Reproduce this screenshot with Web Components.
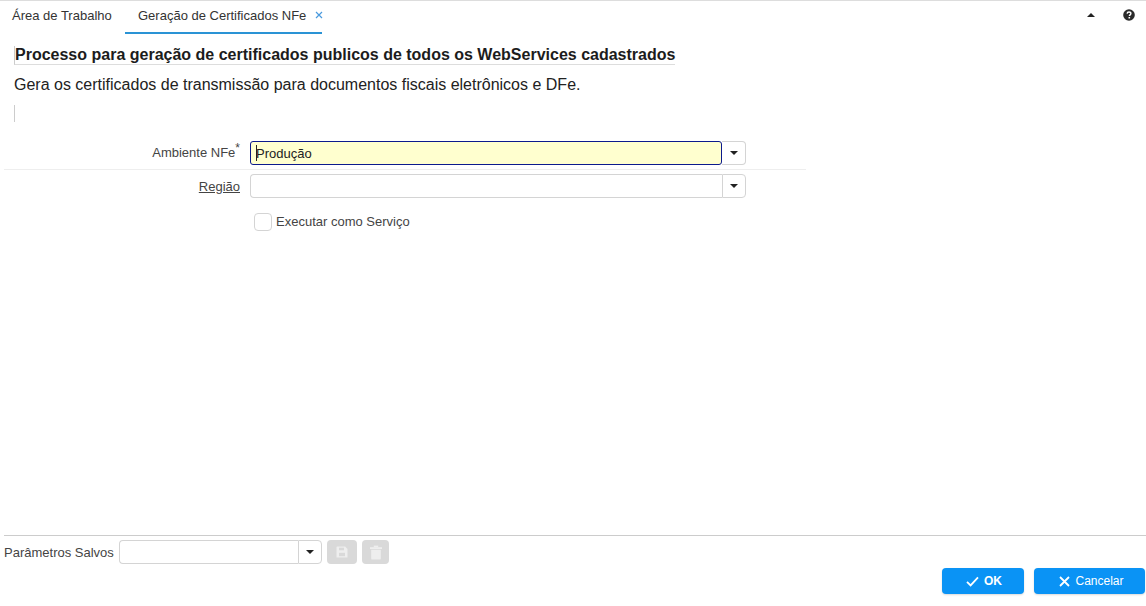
<!DOCTYPE html>
<html lang="pt">
<head>
<meta charset="utf-8">
<title>Geração de Certificados NFe</title>
<style>
  html, body { margin: 0; height: 100%; }
  body { font-family: "Liberation Sans", Arial, sans-serif; color: #333; background: #fff; overflow: hidden; }
</style>
</head>
<body>
<app-shell>
  <tab-bar slot="tabs"></tab-bar>
  <process-header slot="header"
    heading="Processo para geração de certificados publicos de todos os WebServices cadastrados"
    text="Gera os certificados de transmissão para documentos fiscais eletrônicos e DFe."></process-header>
  <param-form slot="form"></param-form>
  <saved-params slot="saved"></saved-params>
  <action-bar slot="actions"></action-bar>
</app-shell>

<script>
class AppShell extends HTMLElement {
  constructor() {
    super();
    this.attachShadow({ mode: "open" });
    this.shadowRoot.innerHTML = `
      <style>
        :host { display: flex; flex-direction: column; height: 606px; box-sizing: border-box; border-top: 1px solid #ddd; }
        .grow { flex: 1; }
      </style>
      <slot name="tabs"></slot>
      <slot name="header"></slot>
      <slot name="form"></slot>
      <div class="grow"></div>
      <slot name="saved"></slot>
      <slot name="actions"></slot>
    `;
  }
}
customElements.define("app-shell", AppShell);

class TabBar extends HTMLElement {
  constructor() {
    super();
    this.attachShadow({ mode: "open" });
    this.shadowRoot.innerHTML = `
      <style>
        :host { display: flex; height: 33px; font-size: 13px; color: #333; }
        .tab { box-sizing: border-box; height: 33px; display: flex; align-items: center; padding-bottom: 5px; white-space: nowrap; }
        .first { margin-left: 12px; width: 113px; }
        .active { width: 197px; padding-left: 13px; border-bottom: 2px solid #2a93d5; padding-bottom: 3px; }
        .close { margin-left: 9px; width: 8px; height: 8px; flex: none; }
        .right { margin-left: auto; display: flex; align-items: center; padding-bottom: 5px; }
        .up { width: 0; height: 0; border: 4px solid transparent; border-top: 0; border-bottom: 4px solid #222; margin-right: 28px; }
        .help { width: 12px; height: 12px; margin-right: 11px; }
      </style>
      <div class="tab first">Área de Trabalho</div>
      <div class="tab active"><span>Geração de Certificados NFe</span>
        <svg class="close" viewBox="0 0 8 8"><path d="M1 1l6 6M7 1L1 7" stroke="#4a9ade" stroke-width="1.2" fill="none"/></svg>
      </div>
      <div class="right">
        <span class="up"></span>
        <svg class="help" viewBox="0 0 12 12"><circle cx="6" cy="6" r="5.8" fill="#2b2b2b"/><path d="M4.1 4.6C4.2 3.5 5 3 6 3c1.1 0 1.9.6 1.9 1.6 0 1.3-1.5 1.3-1.5 2.5" stroke="#fff" stroke-width="1.4" fill="none"/><rect x="5.5" y="8" width="1.6" height="1.5" fill="#fff"/></svg>
      </div>
    `;
  }
}
customElements.define("tab-bar", TabBar);

class ProcessHeader extends HTMLElement {
  constructor() {
    super();
    this.attachShadow({ mode: "open" });
  }
  connectedCallback() {
    this.shadowRoot.innerHTML = `
      <style>
        :host { display: block; padding: 12px 0 0 14px; color: #222; }
        h1 { display: inline-block; margin: 0; font-size: 16px; line-height: 18px; font-weight: bold; color: #1c1c1c; padding: 0; border-left: 1px solid #ccc; border-bottom: 1px solid #ddd; }
        p { margin: 10px 0 0; font-size: 16px; line-height: 20px; }
        .mark { width: 1px; height: 17px; background: #ccc; margin-top: 10px; }
      </style>
      <h1>${this.getAttribute("heading")}</h1>
      <p>${this.getAttribute("text")}</p>
      <div class="mark"></div>
    `;
  }
}
customElements.define("process-header", ProcessHeader);

class ComboBox extends HTMLElement {
  constructor() {
    super();
    this.attachShadow({ mode: "open" });
    this.shadowRoot.innerHTML = `
      <style>
        :host { display: flex; height: 24px; width: var(--combo-width, 496px); font-size: 13px; color: #222; }
        .field { box-sizing: border-box; flex: 1; border: 1px solid #d4d4d4; border-right: 0; border-radius: 4px 0 0 4px; display: flex; align-items: center; padding-left: 5px; background: #fff; }
        .btn { box-sizing: border-box; width: 24px; border: 1px solid #d4d4d4; border-radius: 0 4px 4px 0; display: flex; align-items: center; justify-content: center; background: #fff; }
        .btn i { width: 0; height: 0; border: 4px solid transparent; border-bottom: 0; border-top: 4px solid #222; }
        :host([focused]) .field { background: #ffffcf; border: 1px solid #0c1a8c; border-radius: 3px; padding-left: 5px; }
        :host([focused]) .btn { border-left: 0; width: 24px; }
      </style>
      <div class="field"><slot></slot></div>
      <div class="btn"><i></i></div>
    `;
  }
}
customElements.define("combo-box", ComboBox);

class ParamForm extends HTMLElement {
  constructor() {
    super();
    this.attachShadow({ mode: "open" });
    this.shadowRoot.innerHTML = `
      <style>
        :host { display: block; font-size: 13px; color: #444; padding-top: 19px; }
        .row { display: flex; align-items: center; width: 802px; margin-left: 4px; }
        .row.first { height: 28px; border-bottom: 1px solid #eee; align-items: flex-start; }
        .row.second { height: 24px; margin-top: 4px; }
        label { width: 246px; text-align: right; padding-right: 10px; box-sizing: border-box; }
        .first label { line-height: 24px; }
        .first label sup { font-size: 12px; line-height: 0; }
        .u { text-decoration: underline; }
        .check { display: flex; align-items: center; margin: 15px 0 0 254px; gap: 4px; color: #444; }
        .check .txt { padding-bottom: 2px; }
        .box { box-sizing: border-box; width: 18px; height: 18px; border: 1px solid #d4d4d4; border-radius: 4px; }
        .cursor { display: inline-block; width: 1px; height: 16px; background: #222; vertical-align: -4px; margin-right: -1px; }
      </style>
      <div class="row first">
        <label>Ambiente NFe<sup>*</sup></label>
        <combo-box focused><span class="cursor"></span>Produção</combo-box>
      </div>
      <div class="row second">
        <label><span class="u">Região</span></label>
        <combo-box></combo-box>
      </div>
      <div class="check"><span class="box"></span><span class="txt">Executar como Serviço</span></div>
    `;
  }
}
customElements.define("param-form", ParamForm);

class SavedParams extends HTMLElement {
  constructor() {
    super();
    this.attachShadow({ mode: "open" });
    this.shadowRoot.innerHTML = `
      <style>
        :host { display: flex; align-items: center; gap: 5px; margin-left: 4px; padding-top: 4px; height: 24px; border-top: 1px solid #ccc; font-size: 13px; color: #444; }
        combo-box { --combo-width: 203px; }
        .lbl { width: 110px; white-space: nowrap; }
        .icon { box-sizing: border-box; height: 24px; background: #d9d9d9; border-radius: 4px; display: flex; align-items: center; justify-content: center; }
        .save { width: 30px; }
        .trash { width: 27px; }
        svg { display: block; }
      </style>
      <span class="lbl">Parâmetros Salvos</span>
      <combo-box></combo-box>
      <div class="icon save">
        <svg width="12" height="12" viewBox="0 0 12 12"><path d="M1 .5h8.2L11.5 3v8.5H.5V1z" fill="#eee"/><rect x="3" y="1.7" width="5" height="2.6" fill="#d9d9d9"/><rect x="3" y="6.8" width="6" height="3.4" fill="#d9d9d9"/></svg>
      </div>
      <div class="icon trash">
        <svg width="14" height="15" viewBox="0 0 14 15"><rect x="1" y="2.2" width="12" height="1.8" fill="#eee"/><rect x="4.8" y=".6" width="4.4" height="1.8" fill="#eee"/><path d="M2.2 4.8h9.6v8.6a1.2 1.2 0 0 1-1.2 1.2H3.4a1.2 1.2 0 0 1-1.2-1.2z" fill="#eee"/></svg>
      </div>
    `;
  }
}
customElements.define("saved-params", SavedParams);

class ActionBar extends HTMLElement {
  constructor() {
    super();
    this.attachShadow({ mode: "open" });
    this.shadowRoot.innerHTML = `
      <style>
        :host { display: flex; justify-content: flex-end; gap: 10px; padding: 4px 1px 12px 0; font-size: 12px; color: #fff; }
        .btn { box-sizing: border-box; height: 26px; background: #0a93f5; border-radius: 4px; display: flex; align-items: center; justify-content: center; gap: 5px; box-shadow: 0 1px 2px rgba(0,0,0,.15); }
        .ok { width: 82px; font-weight: bold; padding-left: 2px; }
        .cancel { width: 111px; padding-left: 4px; }
      </style>
      <div class="btn ok">
        <svg width="13" height="11" viewBox="0 0 13 11"><path d="M1 5.8l3.6 3.6L12 1.4" stroke="#fff" stroke-width="1.8" fill="none"/></svg>
        <span>OK</span>
      </div>
      <div class="btn cancel">
        <svg width="11" height="11" viewBox="0 0 11 11"><path d="M1 1l9 9M10 1l-9 9" stroke="#fff" stroke-width="1.8" fill="none"/></svg>
        <span>Cancelar</span>
      </div>
    `;
  }
}
customElements.define("action-bar", ActionBar);
</script>
</body>
</html>
